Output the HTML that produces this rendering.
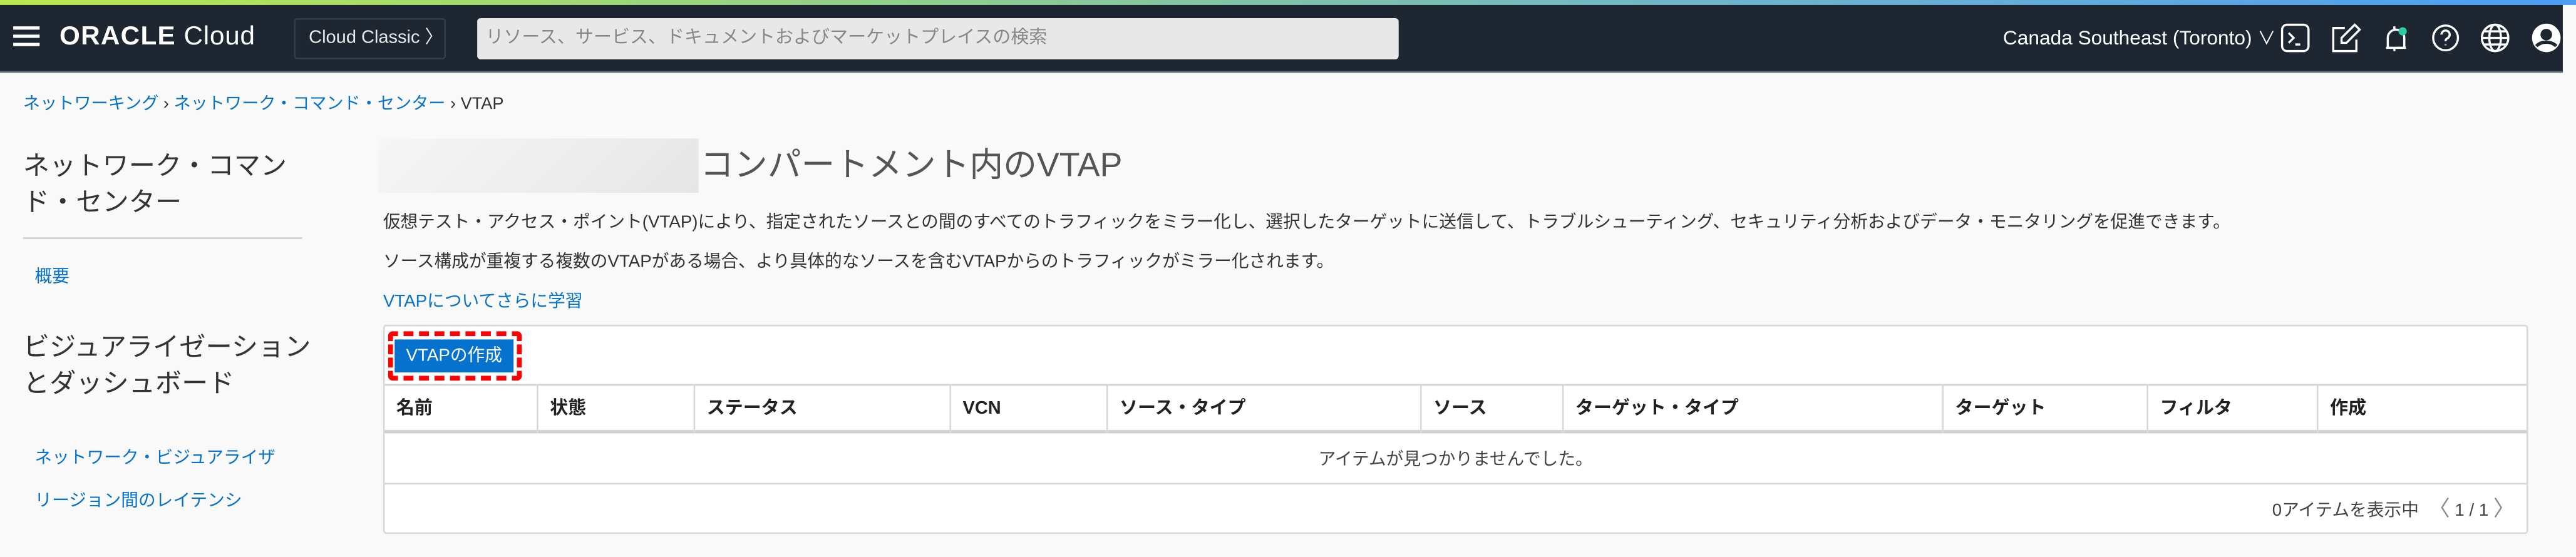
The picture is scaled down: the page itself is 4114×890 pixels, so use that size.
<!DOCTYPE html>
<html><head><meta charset="utf-8"><style>
html,body{margin:0;padding:0;width:4114px;height:890px;overflow:hidden;background:#f9f9f9}
#w{position:absolute;left:0;top:0;width:1560px;height:338px;transform:scale(2.6372,2.6331);transform-origin:0 0;font-family:"Liberation Sans","Noto Sans CJK JP",sans-serif;background:#f9f9f9}
.a{position:absolute;white-space:nowrap}
.grad{left:0;top:0;width:1560px;height:3px;background:linear-gradient(90deg,#b9e84c,#8fd08a 35%,#6fb6c8 65%,#4b9ef6)}
.nav{left:0;top:3px;width:1552px;height:40px;background:#1e2632;border-bottom:1px solid #5a6270}
.blue{color:#0572ce}
.col{position:absolute;top:233px;height:30px;border-left:1px solid #d6d9dc;font-size:11px;font-weight:bold;color:#222;line-height:30px;padding-left:7px;box-sizing:border-box}
</style></head><body><div id="w">
<div class="a grad"></div>
<div class="a nav"></div>
<div class="a" style="left:8px;top:16px;width:16px;height:2px;background:#fff;box-shadow:0 5px 0 #fff,0 10px 0 #fff"></div>
<div class="a" style="left:36px;top:13px;color:#fff;font-size:16px;line-height:20px;letter-spacing:0.3px"><b style="font-weight:bold;letter-spacing:0.5px">ORACLE</b> Cloud</div>
<div class="a" style="left:178px;top:11px;width:92px;height:25px;border:1px solid #333c48;border-radius:2px;box-sizing:border-box;color:#e8e8e8;font-size:11px;line-height:23px;padding-left:8px">Cloud Classic 〉</div>
<div class="a" style="left:289px;top:11px;width:558px;height:25px;background:#e8e8e8;border-radius:2px;color:#888;font-size:11px;line-height:25px;padding-left:5px;box-sizing:border-box">リソース、サービス、ドキュメントおよびマーケットプレイスの検索</div>
<div class="a" style="left:1213px;top:14px;color:#fff;font-size:12px;line-height:18px">Canada Southeast (Toronto) <span style="font-size:11px">∨</span></div>
<svg class="a" style="left:1380px;top:12px" width="172" height="22" viewBox="0 0 172 22" fill="none" stroke="#fff" stroke-width="1.3">
<rect x="2" y="3" width="16" height="16" rx="3"/><path d="M6 8l3 3-3 3M10 15h3"/>
<path d="M40 5h-7v14h14v-7"/><path d="M46 3l3 3-8 8h-3v-3z"/>
<path d="M65 17h12M66 17v-6a5 5 0 0 1 10 0v6M70 4v2M70 17v2"/><circle cx="75" cy="7" r="2.5" fill="#2ecba1" stroke="none"/>
<circle cx="101" cy="11" r="7.5"/><path d="M98.5 9a2.5 2.5 0 1 1 3.5 2.3c-.8.4-1 .9-1 1.7M101 15v.5"/>
<circle cx="131" cy="11" r="8"/><ellipse cx="131" cy="11" rx="3.5" ry="8"/><path d="M123 11h16M124 7h14M124 15h14"/>
<circle cx="162" cy="11" r="8" fill="#fff"/><circle cx="162" cy="9" r="3.5" fill="#1e2632" stroke="none"/><path d="M156 16a7 5 0 0 1 12 0" stroke="#1e2632" stroke-width="2"/>
</svg>
<div class="a" style="left:14px;top:57px;font-size:10.3px;line-height:14px;color:#333"><span class="blue">ネットワーキング</span> › <span class="blue">ネットワーク・コマンド・センター</span> › VTAP</div>
<div class="a" style="left:14px;top:91px;font-size:16px;line-height:22px;color:#333">ネットワーク・コマン<br>ド・センター</div>
<div class="a" style="left:14px;top:144px;width:169px;height:1px;background:#ccc"></div>
<div class="a blue" style="left:21px;top:160px;font-size:10.5px">概要</div>
<div class="a" style="left:14px;top:201px;font-size:16px;line-height:22px;color:#333">ビジュアライゼーション<br>とダッシュボード</div>
<div class="a blue" style="left:21px;top:270px;font-size:10.5px">ネットワーク・ビジュアライザ</div>
<div class="a blue" style="left:21px;top:296px;font-size:10.5px">リージョン間のレイテンシ</div>
<div class="a" style="left:229px;top:84px;width:194px;height:33px;background:linear-gradient(135deg,#f6f6f6,#e6e6e6)"></div>
<div class="a" style="left:424px;top:88px;font-size:20.4px;line-height:26px;color:#555">コンパートメント内のVTAP</div>
<div class="a" style="left:232px;top:127px;font-size:10.5px;color:#333">仮想テスト・アクセス・ポイント(VTAP)により、指定されたソースとの間のすべてのトラフィックをミラー化し、選択したターゲットに送信して、トラブルシューティング、セキュリティ分析およびデータ・モニタリングを促進できます。</div>
<div class="a" style="left:232px;top:151px;font-size:10.5px;color:#333">ソース構成が重複する複数のVTAPがある場合、より具体的なソースを含むVTAPからのトラフィックがミラー化されます。</div>
<div class="a blue" style="left:232px;top:175px;font-size:10.5px">VTAPについてさらに学習</div>
<div class="a" style="left:232px;top:197px;width:1299px;height:127px;background:#fff;border:1px solid #d6d9dc;box-sizing:border-box;border-radius:2px"></div>
<div class="a" style="left:235px;top:201px;width:81px;height:30px;border:3px dashed #f00;box-sizing:border-box;border-radius:3px"></div>
<div class="a" style="left:239px;top:206px;width:72px;height:20px;background:#0572ce;color:#fff;font-size:10.5px;line-height:20px;text-align:center">VTAPの作成</div>
<div class="a" style="left:233px;top:233px;width:1297px;height:30px;border-top:1px solid #ccd0d4;border-bottom:2px solid #ccd0d4;box-sizing:border-box"></div>
<div class="col" style="left:233px;width:92px;border-left:none">名前</div>
<div class="col" style="left:325px;width:95px">状態</div>
<div class="col" style="left:420px;width:155px">ステータス</div>
<div class="col" style="left:575px;width:95px">VCN</div>
<div class="col" style="left:670px;width:190px">ソース・タイプ</div>
<div class="col" style="left:860px;width:86px">ソース</div>
<div class="col" style="left:946px;width:230px">ターゲット・タイプ</div>
<div class="col" style="left:1176px;width:124px">ターゲット</div>
<div class="col" style="left:1300px;width:103px">フィルタ</div>
<div class="col" style="left:1403px;width:127px">作成</div>
<div class="a" style="left:233px;top:263px;width:1297px;height:30px;border-bottom:1px solid #d6d9dc;font-size:10.5px;line-height:32px;text-align:center;color:#444">アイテムが見つかりませんでした。</div>
<div class="a" style="left:1376px;top:301px;font-size:10.5px;line-height:16px;color:#444">0アイテムを表示中 &nbsp;<span style="color:#888;font-size:13px">〈</span> 1 / 1 <span style="color:#888;font-size:13px">〉</span></div>
</div></body></html>
